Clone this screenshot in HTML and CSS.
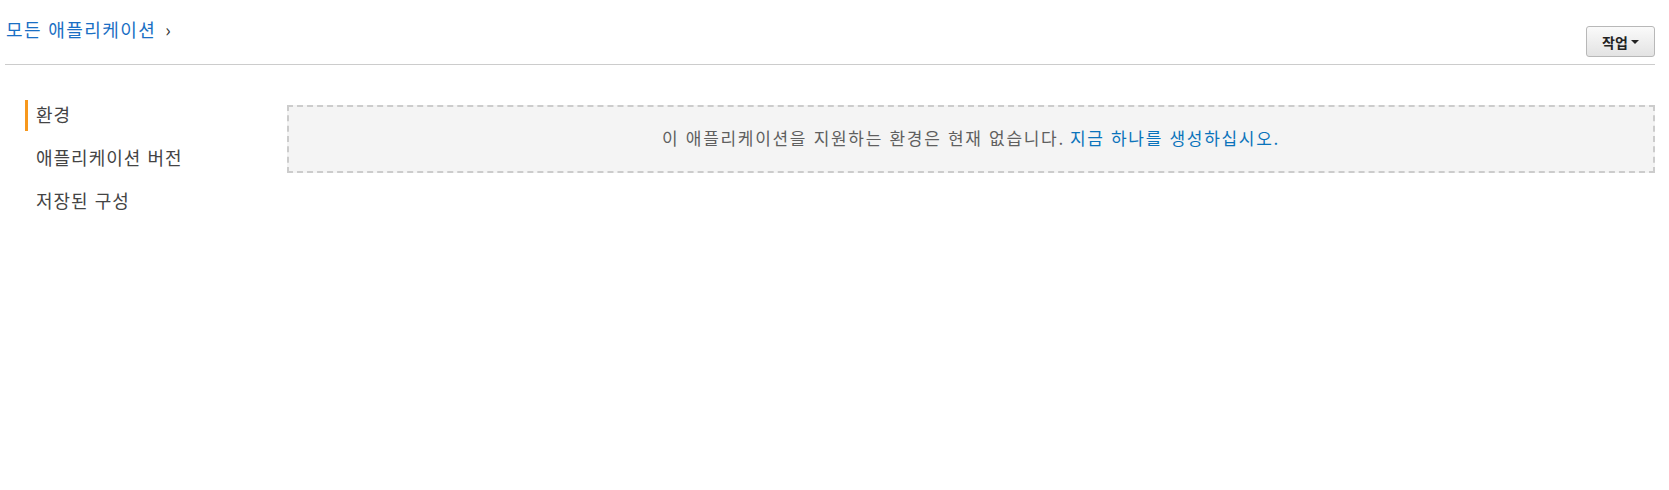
FILE: index.html
```html
<!DOCTYPE html>
<html lang="ko">
<head>
<meta charset="utf-8">
<link rel="stylesheet" href="styles.css">
</head>
<body>
<div class="page">
  <header class="header">
    <nav class="breadcrumb">
      <a class="crumb" href="#">모든 애플리케이션</a>
      <span class="chev">›</span>
    </nav>
    <button class="action-btn">작업 <span class="caret"></span></button>
  </header>
  <div class="main">
    <ul class="sidenav">
      <li class="nav-item active">환경</li>
      <li class="nav-item">애플리케이션 버전</li>
      <li class="nav-item">저장된 구성</li>
    </ul>
    <div class="content">
      <div class="empty">
        이 애플리케이션을 지원하는 환경은 현재 없습니다. <a href="#" class="link">지금 하나를 생성하십시오.</a>
      </div>
    </div>
  </div>
</div>
</body>
</html>
```
FILE: styles.css
```css
html, body {
  margin: 0;
  padding: 0;
  background: #fff;
}
body {
  font-family: "Noto Sans CJK KR", "Noto Sans", sans-serif;
  color: #444;
}
.page {
  padding: 0 14px 0 5px;
}
.header {
  display: flex;
  justify-content: space-between;
  align-items: flex-start;
  border-bottom: 1px solid #ccc;
  height: 64px;
}
.breadcrumb {
  display: flex;
  align-items: center;
  padding: 16px 0 0 1px;
  gap: 9px;
}
.crumb {
  color: #1a6fc4;
  text-decoration: none;
  font-size: 18px;
  line-height: 26px;
  letter-spacing: 1.4px;
}
.chev {
  font-size: 18px;
  line-height: 26px;
  color: #333;
}
.action-btn {
  margin-top: 26px;
  width: 69px;
  height: 31px;
  border: 1px solid #b8b8b8;
  border-radius: 3px;
  background: linear-gradient(#fafafa, #e3e3e3);
  font-family: "Noto Sans CJK KR", sans-serif;
  font-size: 14px;
  font-weight: 700;
  color: #222;
  display: flex;
  align-items: center;
  justify-content: center;
  gap: 3px;
  padding: 0;
}
.caret {
  width: 0;
  height: 0;
  border-left: 4px solid transparent;
  border-right: 4px solid transparent;
  border-top: 4px solid #222;
}
.main {
  display: flex;
  align-items: flex-start;
  padding-top: 35px;
}
.sidenav {
  list-style: none;
  margin: 0;
  padding: 0 0 0 20px;
  width: 282px;
  box-sizing: border-box;
}
.nav-item {
  height: 31px;
  line-height: 29px;
  font-size: 18px;
  letter-spacing: 1px;
  padding-left: 8px;
  margin-bottom: 12px;
  border-left: 3px solid transparent;
  color: #444;
}
.nav-item.active {
  border-left-color: #f7981d;
}
.content {
  flex: 1;
  padding-top: 5px;
}
.empty {
  height: 64px;
  box-sizing: content-box;
  border: 2px dashed #ccc;
  background: #f4f4f4;
  display: flex;
  align-items: center;
  justify-content: center;
  font-size: 17px;
  letter-spacing: 1.7px;
  word-spacing: 0;
  color: #5f5f5f;
  line-height: 20px;
  padding-bottom: 2px;
  height: 62px;
}
.link {
  color: #0a73bb;
  text-decoration: none;
  margin-left: 5px;
}
```
